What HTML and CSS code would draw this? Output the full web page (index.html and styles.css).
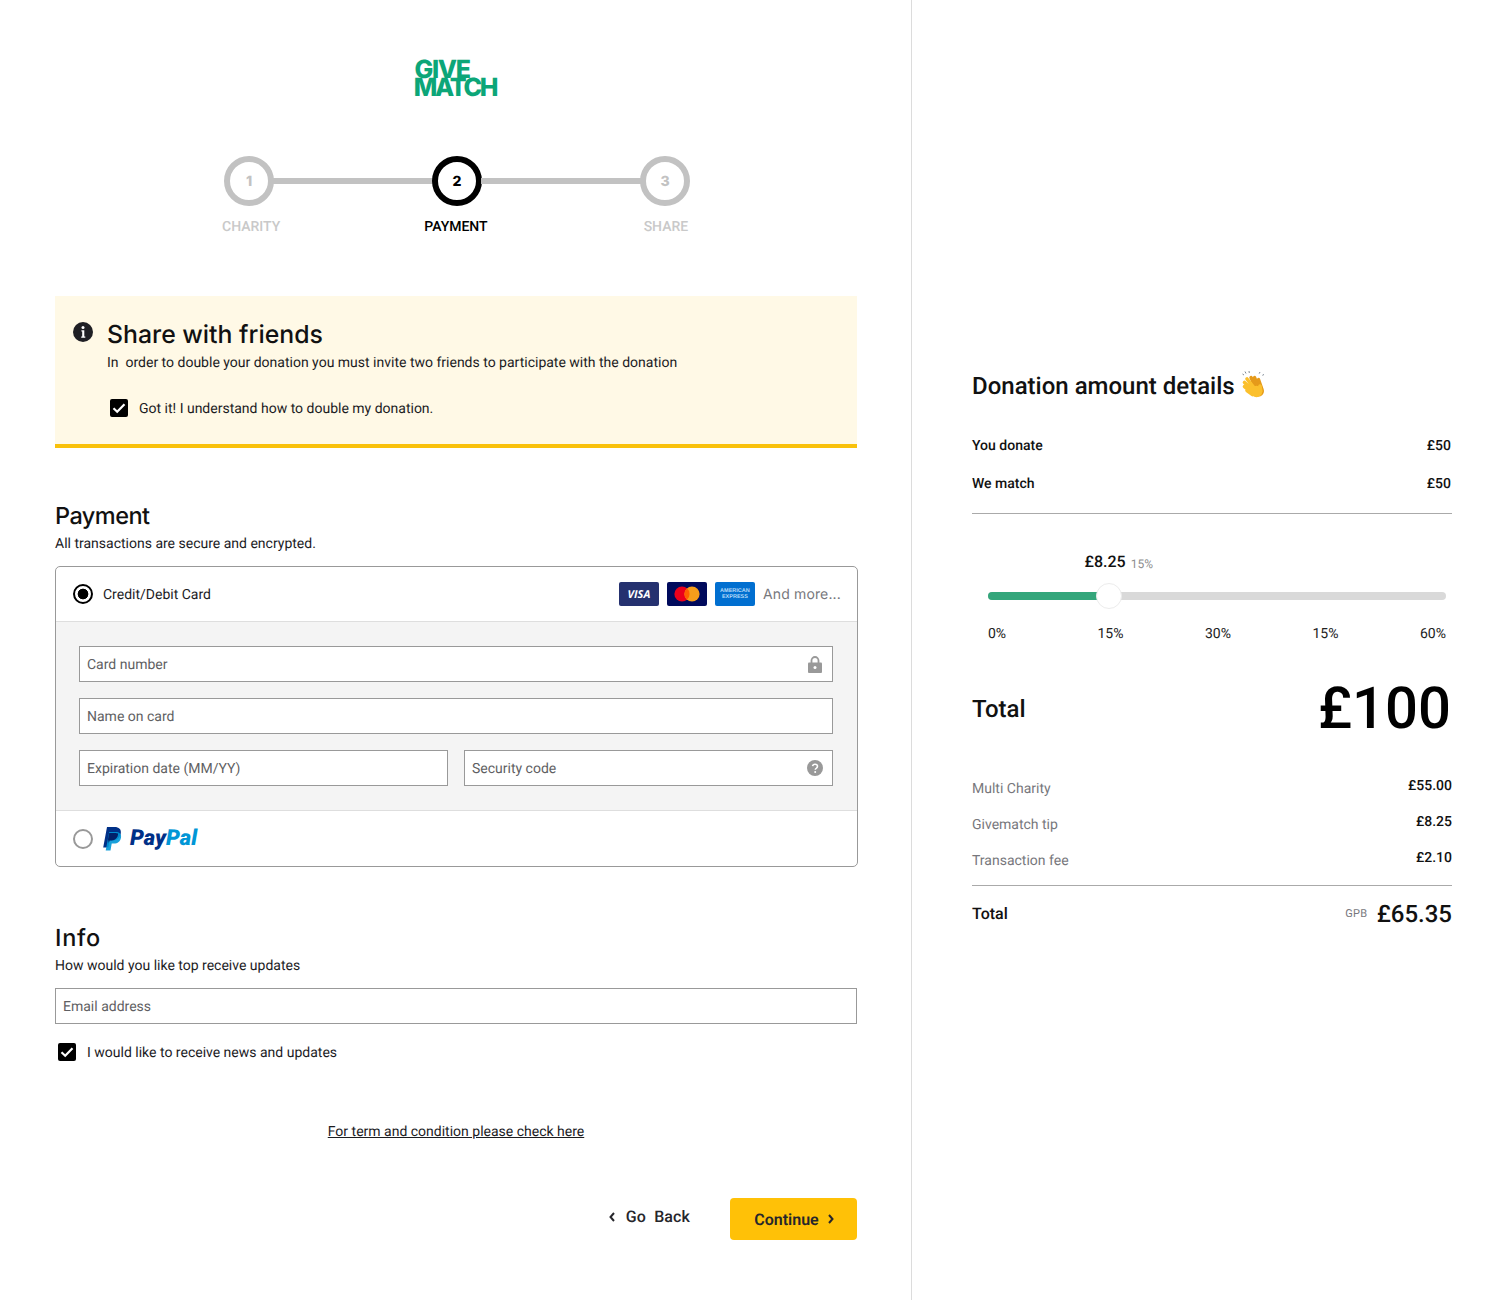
FILE: index.html
```html
<!DOCTYPE html>
<html lang="en">
<head>
<meta charset="utf-8">
<title>Givematch payment</title>
<link rel="stylesheet" href="styles.css">
</head>
<body>
<div class="page">
  <main class="left">
    <div class="logo"><span>GIVE</span><span>MATCH</span></div>
    <div class="stepper">
      <div class="step">1</div>
      <div class="connector"></div>
      <div class="step step-active">2</div>
      <div class="connector"></div>
      <div class="step">3</div>
    </div>
    <div class="step-labels">
      <span class="step-label">CHARITY</span>
      <span class="step-label step-label-active">PAYMENT</span>
      <span class="step-label">SHARE</span>
    </div>

    <section class="banner">
      <svg class="info-icon" viewBox="0 0 20 20"><circle cx="10" cy="10" r="10" fill="#1f1f24"/><circle cx="10" cy="5.6" r="1.5" fill="#fff"/><path d="M8.4 8.3h2.9v6.1h1v1.3H8.2v-1.3h1V9.6h-.8z" fill="#fff"/></svg>
      <div class="banner-body">
        <h2 class="banner-title">Share with friends</h2>
        <p class="banner-text">In &nbsp;order to double your donation you must invite two friends to participate with the donation</p>
        <label class="check-row check-row-banner">
          <svg class="check" viewBox="0 0 18 18"><rect width="18" height="18" rx="2" fill="#000"/><path d="M3.500 9.300l3.700 3.500L14.500 5.300" fill="none" stroke="#fff" stroke-width="2.200"/></svg>
          <span>Got it! I understand how to double my donation.</span>
        </label>
      </div>
    </section>

    <h2 class="section-title section-title-payment">Payment</h2>
    <p class="section-sub">All transactions are secure and encrypted.</p>

    <div class="card">
      <div class="card-row card-row-top">
        <span class="radio radio-on"></span>
        <span class="card-row-label">Credit/Debit Card</span>
        <div class="brands">
          <span class="brand brand-visa">VISA</span>
          <span class="brand brand-mc">
            <svg viewBox="0 0 26 16" width="26" height="16"><circle cx="8" cy="8" r="7.6" fill="#eb001b"/><circle cx="18" cy="8" r="7.6" fill="#f79e1b"/><path d="M13 2.3a7.6 7.6 0 0 1 0 11.4 7.6 7.6 0 0 1 0-11.4z" fill="#ff5f00"/></svg>
          </span>
          <span class="brand brand-amex"><span>AMERICAN</span><span>EXPRESS</span></span>
          <span class="more">And more...</span>
        </div>
      </div>
      <div class="card-fields">
        <div class="field"><span>Card number</span>
          <svg class="field-icon" viewBox="0 0 14 17"><path d="M3.5 7V4.5a3.5 3.5 0 0 1 7 0V7" fill="none" stroke="#999" stroke-width="1.8"/><rect y="6.5" width="14" height="10.5" rx="1" fill="#999"/><circle cx="7" cy="11.5" r="1.5" fill="#fff"/></svg>
        </div>
        <div class="field"><span>Name on card</span></div>
        <div class="field-pair">
          <div class="field"><span>Expiration date (MM/YY)</span></div>
          <div class="field"><span>Security code</span>
            <svg class="field-icon field-icon-help" viewBox="0 0 16 16"><circle cx="8" cy="8" r="8" fill="#999"/><path d="M5.6 6.2A2.4 2.4 0 0 1 8 4.2c1.4 0 2.5.9 2.5 2.1 0 1-.6 1.500-1.300 2-.6.4-.9.7-.9 1.400" fill="none" stroke="#fff" stroke-width="1.6"/><circle cx="8.2" cy="12" r="1" fill="#fff"/></svg>
          </div>
        </div>
      </div>
      <div class="card-row">
        <span class="radio"></span>
        <svg class="pp-mark" viewBox="0 0 20 24"><path d="M5 0h7.500C17 0 19.500 2.400 18.800 6.300 18 11 15 13.400 10.500 13.400H7.600L6.300 20.500H1.200z" fill="#003087"/><path d="M7.200 5h6.500c3.600 0 5.900 1.900 5.300 5.400-.7 4-3.300 6-7.100 6H9.700L8.500 23.500H3.700z" fill="#0096d6" opacity=".9"/><path d="M6 12.200l1.200-6.200h6.300c.9 0 1.900.2 2.600.5-.1 4.300-3 6.900-6.300 6.900H7.600L6.800 16z" fill="#012169"/></svg>
        <span class="pp-text"><span class="pp-pay">Pay</span><span class="pp-pal">Pal</span></span>
      </div>
    </div>

    <h2 class="section-title section-title-info">Info</h2>
    <p class="section-sub">How would you like top receive updates</p>
    <div class="field field-email"><span>Email address</span></div>
    <label class="check-row check-row-news">
      <svg class="check" viewBox="0 0 18 18"><rect width="18" height="18" rx="2" fill="#000"/><path d="M3.500 9.300l3.700 3.500L14.500 5.300" fill="none" stroke="#fff" stroke-width="2.200"/></svg>
      <span>I would like to receive news and updates</span>
    </label>
    <a class="terms" href="#">For term and condition please check here</a>
    <div class="actions">
      <a class="back" href="#">
        <svg class="chev" viewBox="0 0 8 10"><path d="M6 1L2.500 5 6 9" fill="none" stroke="#26262b" stroke-width="2"/></svg>
        <span>Go&nbsp; Back</span>
      </a>
      <button class="continue" type="button">Continue
        <svg class="chev" viewBox="0 0 8 10"><path d="M2 1l3.500 4L2 9" fill="none" stroke="#26262b" stroke-width="2"/></svg>
      </button>
    </div>
  </main>

  <aside class="right">
    <h2 class="details-title">Donation amount details
      <svg class="clap" viewBox="0 0 26 30">
        <path d="M4 0.500l1 2M8 0l.3 2M19 1l-.8 1.600M23 3.500l-1.600 .8M1.500 3l1.500 1" stroke="#7f8a96" stroke-width="1" fill="none"/>
        <g fill="none" stroke="#e59a1a" stroke-width="3.400" stroke-linecap="round">
          <path d="M15 18L10 6.500M18 17l-4.500-10.500M20.500 17l-3-8.500"/>
        </g>
        <circle cx="17.500" cy="20" r="5.500" fill="#e59a1a"/>
        <g fill="none" stroke="#fbc02d" stroke-width="3.600" stroke-linecap="round">
          <path d="M14 18L6 8M12 19L3.500 11.500M11 21.500L3.500 15.500M11.500 23.500L6 19.500"/>
          <path d="M19 15l.8 5"/>
        </g>
        <circle cx="15.500" cy="20.500" r="5.800" fill="#fbc02d"/>
      </svg>
    </h2>
    <div class="kv kv-first"><span>You donate</span><span>£50</span></div>
    <div class="kv kv-second"><span>We match</span><span>£50</span></div>
    <hr class="rule rule-top">
    <div class="slider-value"><strong>£8.25</strong><small>15%</small></div>
    <div class="slider-track"><div class="slider-fill"></div><div class="slider-thumb"></div></div>
    <div class="ticks"><span class="tick-first">0%</span><span>15%</span><span>30%</span><span>15%</span><span>60%</span></div>
    <div class="total-big"><span class="total-big-label">Total</span><span class="total-big-value">£100</span></div>
    <div class="fee fee-first"><span class="fee-label">Multi Charity</span><span class="fee-value">£55.00</span></div>
    <div class="fee"><span class="fee-label">Givematch tip</span><span class="fee-value">£8.25</span></div>
    <div class="fee"><span class="fee-label">Transaction fee</span><span class="fee-value">£2.10</span></div>
    <hr class="rule rule-bottom">
    <div class="grand"><span class="grand-label">Total</span><span class="grand-amount"><small>GPB</small><strong>£65.35</strong></span></div>
  </aside>
</div>
</body>
</html>
```
FILE: styles.css
```css
* { box-sizing: border-box; }
html, body { margin: 0; padding: 0; background: #fff; }
body { font-family: Roboto, "Liberation Sans", sans-serif; font-size: 14px; line-height: 20px; color: #1c1c1f; text-rendering: geometricPrecision; }
h2, p { margin: 0; }
a { color: inherit; }
.page { display: flex; min-height: 1300px; }

/* 14px body copy sits one pixel lower in its 20px row */
.banner-text, .check-row span, .section-sub, .card-row-label, .field span, .terms, .kv span, .ticks span, .fee-label, .fee-value, .more { height: 20px; line-height: 22px; }

.left { width: 912px; flex: none; padding: 58px 54px 0 55px; border-right: 1px solid #dcdcdc; }
.right { flex: 1; padding: 370px 60px 0; }

.logo { display: flex; flex-direction: column; align-items: center; height: 40px; padding-top: 3px; font-family: Inter, sans-serif; font-weight: 800; font-size: 25px; line-height: 18px; letter-spacing: -2.300px; color: #0ca678; }
.logo span:first-child { margin-right: 28px; letter-spacing: -1.300px; }
.logo span:last-child { margin-right: 2px; }

.stepper { display: flex; align-items: center; margin: 58px 167px 0 169px; }
.step { width: 50px; height: 50px; flex: none; padding-top: 1px; border: 6px solid #c2c2c2; border-radius: 50%; display: flex; align-items: center; justify-content: center; font-family: Inter, sans-serif; font-weight: 800; font-size: 14px; color: #c2c2c2; }
.step-active { border-color: #000; color: #000; }
.connector { flex: 1; height: 6px; background: #c2c2c2; margin: 0 -1px; }
.step-labels { display: flex; margin: 11px 0 0 167px; }
.step-label { font-weight: 500; color: #c9c9c9; }
.step-label-active { color: #000; margin: 0 156px 0 144px; }

.banner { display: flex; gap: 14px; height: 152px; margin-top: 59px; padding: 22px 18px 0; background: #fff9e6; border-bottom: 4px solid #f9c10b; }
.info-icon { width: 20px; height: 20px; flex: none; margin-top: 4px; }
.banner-title { font-family: Inter, sans-serif; font-weight: 500; font-size: 24.800px; line-height: 33px; height: 32px; color: #111; }
.banner-text { margin-top: 2px; }
.check-row { display: flex; align-items: center; gap: 11px; }
.check-row-banner { margin: 26px 0 0 3px; }
.check-row-news { margin: 18px 0 0 3px; }
.check { width: 18px; height: 18px; flex: none; }

.section-title { font-family: Inter, sans-serif; font-weight: 500; font-size: 23.500px; line-height: 32px; color: #111; }
.section-title-payment { margin-top: 52px; letter-spacing: -.55px; }
.section-title-info { margin-top: 55px; letter-spacing: .75px; }
.section-sub { margin-top: 1px; }

.card { width: 803px; margin: 13px -1px 0 0; border: 1px solid #999; border-radius: 5px; overflow: hidden; }
.card-row { display: flex; align-items: center; height: 55px; padding: 0 16px 0 17px; }
.card-row-top { height: 54px; }
.radio { width: 20px; height: 20px; flex: none; border: 2px solid #999; border-radius: 50%; }
.radio-on { border-color: #000; background: radial-gradient(circle, #000 0, #000 5px, #fff 5.700px); }
.card-row-label { margin-left: 10px; }
.brands { margin-left: auto; display: flex; align-items: center; gap: 8px; }
.brand { width: 40px; height: 24px; border-radius: 2px; display: flex; align-items: center; justify-content: center; color: #fff; }
.brand-visa { background: #25316f; font: italic 700 11px/1 "Open Sans", sans-serif; }
.brand-mc { background: #000a5c; }
.brand-amex { background: #016fd0; flex-direction: column; font: 700 5.500px/6px "Liberation Sans", sans-serif; color: #b8dcf8; }
.more { font-family: Inter, sans-serif; font-size: 14px; letter-spacing: .15px; color: #77777c; }

.card-fields { display: flex; flex-direction: column; gap: 16px; padding: 24px 24px 24px 23px; background: #f4f4f4; border-top: 1px solid #dedede; border-bottom: 1px solid #dedede; }
.field { display: flex; align-items: center; justify-content: space-between; height: 36px; padding: 0 8px 0 7px; background: #fff; border: 1px solid #999; color: #5f5f63; }
.field-pair { display: grid; grid-template-columns: 1fr 1fr; gap: 16px; }
.field-icon { width: 14px; height: 17px; margin-right: 2px; }
.field-icon-help { width: 16px; height: 16px; margin-right: 1px; }
.field-email { margin-top: 13px; }

.pp-mark { width: 20px; height: 24px; margin-left: 9px; flex: none; }
.pp-text { margin-left: 8px; padding-top: 1px; font: italic 900 22px/1 Roboto, sans-serif; }
.pp-pay { color: #003087; }
.pp-pal { color: #0096d6; }

.terms { display: block; margin-top: 59px; text-align: center; text-decoration: underline; }

.actions { display: flex; align-items: flex-start; justify-content: flex-end; gap: 40px; margin-top: 57px; }
.back { display: flex; align-items: center; gap: 10px; height: 38px; text-decoration: none; font-size: 16px; font-weight: 500; letter-spacing: .1px; color: #26262b; }
.chev { width: 8px; height: 10px; flex: none; }
.continue { display: flex; align-items: center; justify-content: center; gap: 8px; width: 127px; height: 42px; padding: 0 0 0 2px; border: 0; border-radius: 4px; background: #ffc107; font-family: Roboto, sans-serif; font-size: 16px; font-weight: 600; color: #26262b; text-rendering: geometricPrecision; }

.details-title { display: flex; align-items: center; gap: 6px; font-weight: 500; font-size: 24px; line-height: 32px; color: #111; }
.clap { width: 26px; height: 30px; }
.kv { display: flex; justify-content: space-between; padding-right: 1px; font-weight: 500; color: #111; }
.kv-first { margin-top: 33px; }
.kv-second { margin-top: 18px; }
.rule { height: 1px; margin: 0; border: 0; background: #aaa; }
.rule-top { margin-top: 20px; }
.slider-value { display: flex; align-items: baseline; gap: 5px; height: 24px; margin: 36px 0 0 112.500px; line-height: 24px; }
.slider-value strong { font-size: 16px; font-weight: 500; color: #111; }
.slider-value small { font-size: 12px; color: #8d8d8d; position: relative; top: 1px; }
.slider-track { position: relative; height: 8px; margin: 18px 6px 0 16px; border-radius: 4px; background: #d9d9d9; }
.slider-fill { width: 112px; height: 8px; border-radius: 4px 0 0 4px; background: #34a67b; }
.slider-thumb { position: absolute; left: 108px; top: -9px; width: 26px; height: 26px; border-radius: 50%; background: #fff; border: 1px solid #ececec; }
.ticks { display: flex; justify-content: flex-end; gap: 81.500px; margin: 23px 6px 0 16px; color: #222; }
.tick-first { margin-right: auto; }
.total-big { display: flex; align-items: center; justify-content: space-between; height: 70px; margin-top: 31px; color: #111; }
.total-big-label { font-size: 24px; font-weight: 500; }
.total-big-value { font-size: 58px; line-height: 70px; font-weight: 500; margin-right: 1px; color: #000; }
.fee { display: flex; justify-content: space-between; align-items: flex-start; height: 23px; margin-top: 13px; }
.fee-first { margin-top: 31px; }
.fee-label { margin-top: 3px; color: #77777c; }
.fee-value { font-weight: 500; color: #111; }
.rule-bottom { margin-top: 15px; }
.grand { display: flex; justify-content: space-between; align-items: center; height: 32px; margin-top: 12px; }
.grand-label { font-size: 16px; font-weight: 500; color: #111; }
.grand-amount { display: flex; align-items: center; gap: 9px; }
.grand-amount small { font-size: 11px; letter-spacing: .4px; color: #77777c; }
.grand-amount strong { font-size: 24px; font-weight: 500; color: #111; }
```
